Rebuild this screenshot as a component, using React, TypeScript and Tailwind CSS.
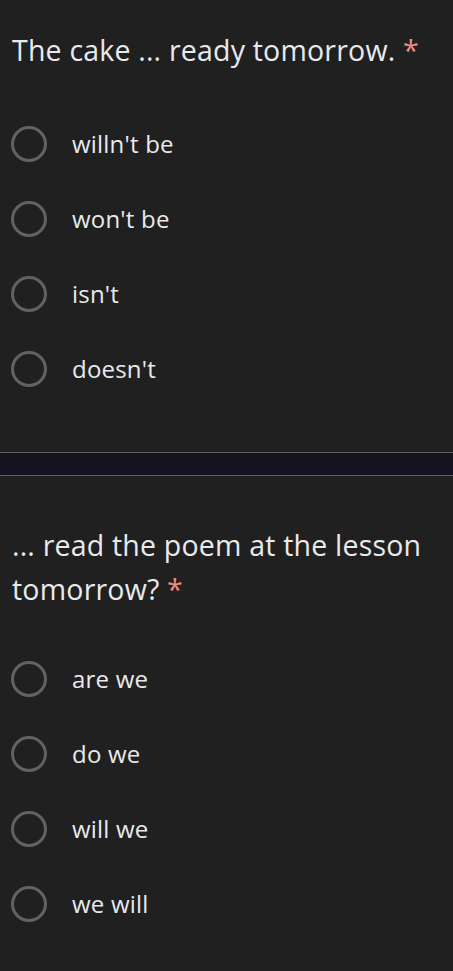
const font = { fontFamily: '"Open Sans", Roboto, sans-serif' }

function Option({ label }: { label: string }) {
  return (
    <div className="flex h-[75px] items-center">
      <div className="ml-[11px] h-9 w-9 shrink-0 rounded-full border-[3px] border-[#5f6368]" />
      <span className="ml-[25px] text-[24px] tracking-[0.2px] text-[#e8eaed]">{label}</span>
    </div>
  )
}

export default function App() {
  return (
    <main className="min-h-[971px] w-[453px] bg-[#202020]" style={font}>
      <section className="pt-[28px] pb-[46px]">
        <h1 className="px-3 text-[28.5px] leading-[44px] tracking-[0.2px] text-[#e8eaed]">
          The cake ... ready tomorrow. <span className="text-[#f28b82]">*</span>
        </h1>
        <div className="mt-[34px]">
          {['willn\'t be', 'won\'t be', 'isn\'t', 'doesn\'t'].map((o) => (
            <Option key={o} label={o} />
          ))}
        </div>
      </section>

      <div className="h-[24px] border-y border-[#5c5c62] bg-[#15121f]" />

      <section className="pt-[47px] pb-10">
        <h2 className="pr-2 pl-3 text-[28.5px] leading-[44px] tracking-[0.2px] text-[#e8eaed]">
          ... read the poem at the lesson tomorrow?{' '}
          <span className="text-[#f28b82]">*</span>
        </h2>
        <div className="mt-[30px]">
          {['are we', 'do we', 'will we', 'we will'].map((o) => (
            <Option key={o} label={o} />
          ))}
        </div>
      </section>
    </main>
  )
}
